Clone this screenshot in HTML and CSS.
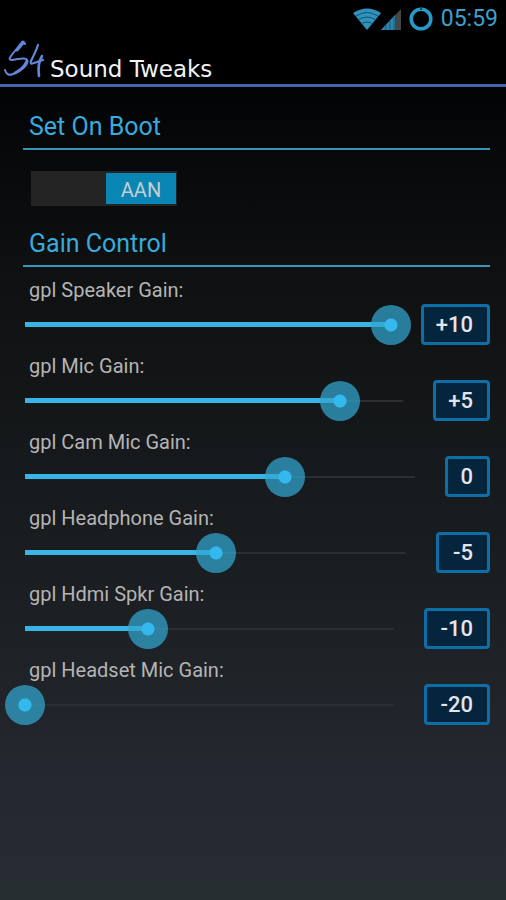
FILE: index.html
```
<!DOCTYPE html>
<html lang="en">
<head>
<meta charset="utf-8">
<meta name="viewport" content="width=device-width, initial-scale=1">
<title>Sound Tweaks</title>
<link rel="stylesheet" href="styles.css">
</head>
<body>
<div class="status">
  <div class="signals">
    <svg width="28" height="22" viewBox="0 0 28 22" aria-hidden="true">
      <path d="M0 5Q14 -4 28 5L14 22Z" fill="#3193bd"/>
      <path d="M3 8Q14 1 25 8M5 12Q14 6 23 12M8 16Q14 12 20 16" fill="none" stroke="#14506c" stroke-width="1"/>
    </svg>
    <svg width="20" height="21" viewBox="0 0 20 21" aria-hidden="true">
      <path d="M0 21L20 0V21Z" fill="#444647"/>
      <path d="M0 21L14 6V21Z" fill="#2b87b0"/>
      <path d="M5 16V21M9 12V21M13 8V21" stroke="#155676" stroke-width="1"/>
    </svg>
  </div>
  <svg width="24" height="24" viewBox="0 0 24 24" aria-hidden="true">
    <circle cx="12" cy="12" r="9.8" fill="none" stroke="#249bca" stroke-width="3.6"/>
    <path d="M11 0h2v3h-2z" fill="#17465a"/>
  </svg>
  <time>05:59</time>
</div>
<header class="title-bar">
  <svg class="logo" width="44" height="42" viewBox="0 0 44 42" role="img" aria-label="S4">
    <g fill="none" stroke="#6288dc" stroke-linecap="round" stroke-linejoin="round">
      <path d="M21 5C20 3 19 2 18 3C15 7 10 13 7 17C5 20 5 21 8 21C15 20 22 18 23 21C25 26 16 33 9 35C5 37 2 35 1 31" stroke-width="2"/>
      <path d="M19 4L13 11M23 22C21 27 17 31 11 34" stroke-width="3"/>
      <path d="M34 6C32 12 29 18 27 22C26 25 27 25 30 24L39 21" stroke-width="2.2"/>
      <path d="M38 17C35 22 34 30 35 37" stroke-width="2.6"/>
    </g>
  </svg>
  <h1>Sound Tweaks</h1>
</header>
<main>
  <h2>Set On Boot</h2>
  <label class="switch"><input type="checkbox" role="switch" aria-label="Set On Boot" checked><span>AAN</span></label>

  <h2>Gain Control</h2>
  <div class="gain">
    <label for="speaker">gpl Speaker Gain:</label>
    <div class="control">
      <input id="speaker" type="range" min="-20" max="10" value="10" style="--fill: 1">
      <button type="button">+10</button>
    </div>
  </div>
  <div class="gain">
    <label for="mic">gpl Mic Gain:</label>
    <div class="control">
      <input id="mic" type="range" min="-20" max="10" value="5" style="--fill: 0.8333">
      <button type="button">+5</button>
    </div>
  </div>
  <div class="gain">
    <label for="cam">gpl Cam Mic Gain:</label>
    <div class="control">
      <input id="cam" type="range" min="-20" max="10" value="0" style="--fill: 0.6667">
      <button type="button">0</button>
    </div>
  </div>
  <div class="gain">
    <label for="headphone">gpl Headphone Gain:</label>
    <div class="control">
      <input id="headphone" type="range" min="-20" max="10" value="-5" style="--fill: 0.5">
      <button type="button" class="negative">-5</button>
    </div>
  </div>
  <div class="gain">
    <label for="hdmi">gpl Hdmi Spkr Gain:</label>
    <div class="control">
      <input id="hdmi" type="range" min="-20" max="10" value="-10" style="--fill: 0.3333">
      <button type="button" class="negative">-10</button>
    </div>
  </div>
  <div class="gain">
    <label for="headset">gpl Headset Mic Gain:</label>
    <div class="control">
      <input id="headset" type="range" min="-20" max="10" value="-20" style="--fill: 0">
      <button type="button" class="negative">-20</button>
    </div>
  </div>
</main>
<div class="bottom-edge"></div>
</body>
</html>
```
FILE: styles.css
```
* {
  box-sizing: border-box;
}

body {
  margin: 0;
  min-height: 100vh;
  display: flex;
  flex-direction: column;
  background: linear-gradient(#000 0, #030405 90px, #0e1011 270px, #16191b 450px, #1e2125 650px, #242830 780px, #282b34 900px);
  color: #b4b4b4;
  font-family: Roboto, "Liberation Sans", sans-serif;
}

.status {
  display: flex;
  align-items: center;
  justify-content: flex-end;
  gap: 8px;
  height: 38px;
  padding-right: 8px;
  background: #000;
  color: #3ba0cf;
  font-size: 23px;
  line-height: 38px;
}

.signals {
  display: flex;
  align-items: flex-end;
}

.title-bar {
  display: flex;
  align-items: flex-end;
  gap: 2px;
  height: 49px;
  padding-left: 4px;
  border-bottom: 3px solid #4a62a6;
  background: #000;
}

.logo {
  margin-bottom: 3px;
}

h1 {
  margin: 0;
  color: #f2f2f2;
  font: 23px/30px "DejaVu Sans", sans-serif;
}

main {
  flex: 1;
  padding: 22px 16px 16px 5px;
}

h2 {
  margin: 0 0 11px 18px;
  padding: 0 6px 4px;
  border-bottom: 2px solid #3795be;
  color: #38abdc;
  font-size: 25px;
  font-weight: 400;
  line-height: 35px;
}

.switch {
  display: flex;
  width: 146px;
  height: 35px;
  margin: 21px 0 20px 26px;
  padding: 2px 1px;
  background: #242424;
}

.switch input {
  position: absolute;
  opacity: 0;
}

.switch span {
  width: 70px;
  background: #0a86b4;
  color: #c8cdd0;
  font-size: 20px;
  line-height: 34px;
  text-align: center;
}

.switch input:checked + span {
  margin-left: auto;
}

.gain {
  margin-bottom: 9px;
}

.gain label {
  display: block;
  margin: 0 0 2px 24px;
  font-size: 20px;
  line-height: 24px;
}

.control {
  display: flex;
  align-items: center;
  gap: 10px;
}

.control input {
  appearance: none;
  flex: 1;
  min-width: 0;
  height: 41px;
  margin: 0;
  background:
    linear-gradient(#38b4e6, #38b4e6) 20px 50% / calc((100% - 40px) * var(--fill)) 5px no-repeat,
    linear-gradient(#2c2f32, #2c2f32) 20px 50% / calc(100% - 40px) 2px no-repeat;
}

.control input::-webkit-slider-thumb {
  appearance: none;
  width: 40px;
  height: 40px;
  border-radius: 50%;
  background: radial-gradient(circle, #33b9ed 6px, rgba(50, 166, 208, 0.72) 7px);
}

.control button {
  height: 41px;
  padding: 1px 14px 0 12px;
  border: 3px solid #0d6ea8;
  border-radius: 4px;
  background: #04253b;
  color: #e4e4ec;
  font: 500 22px/34px Roboto, "Liberation Sans", sans-serif;
}

.control .negative {
  padding-left: 14px;
}

.bottom-edge {
  height: 20px;
  background: #272e31;
}
```
